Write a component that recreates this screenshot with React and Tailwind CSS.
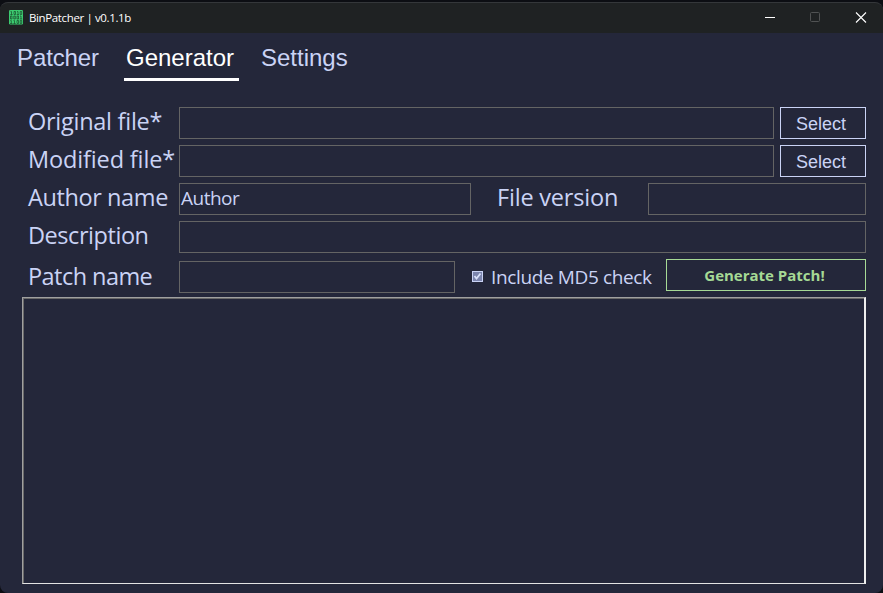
const segoe = "font-['Open_Sans','Noto_Sans',sans-serif]";
const arial = "font-['Liberation_Sans',Arial,sans-serif]";

function AppIcon() {
  return (
    <svg width="14" height="15" viewBox="0 0 14 15" className="block">
      <rect width="14" height="14.500" rx="1.200" fill="#3ccb70" />
      <g fill="none" stroke="#173d25" strokeWidth=".65">
        <path d="M1.500 1.600h1v3M1.300 4.600h2.400M5 1.500h1.500v3h-1.500zM8 1.600h1v3M7.700 4.600h2.300M11.200 1.500h1.500v3h-1.500z" />
        <path d="M1.500 6h1.500v3h-1.500zM4.800 6h1.500v3h-1.500zM8 6h1.500v3h-1.500zM11 6h1v3M10.800 9h2.400" />
        <path d="M1.300 10.600h1v3M1 13.500h2.500M4.500 10.600h1v3M4.300 13.500h2.400M8 10.500h1.500v3h-1.500zM11.200 10.500h1.500v3h-1.500z" />
      </g>
    </svg>
  );
}

function TitleBar() {
  return (
    <header className="flex h-[31px] shrink-0 items-start rounded-t-lg border-t border-[#34373a] bg-[#1f2223]">
      <div className="ml-[9px] mt-[7px]">
        <AppIcon />
      </div>
      <span className="ml-[6px] mt-[7px] whitespace-nowrap font-['Open_Sans','Noto_Sans',sans-serif] text-[11.5px] leading-4 tracking-[-0.37px] text-white">
        BinPatcher | v0.1.1b
      </span>
      <div className="ml-auto mr-[16px] mt-[9px] flex">
        <svg width="11" height="11" viewBox="0 0 11 11" className="mr-[34px]"><path d="M0 5.500h10" stroke="#fff" /></svg>
        <svg width="10" height="11" viewBox="0 0 10 11" className="mr-[35px]"><rect x=".5" y=".5" width="9" height="9" rx="1" fill="none" stroke="#505253" /></svg>
        <svg width="12" height="11" viewBox="0 0 12 11"><path d="M1 .5l10 10M11 .5l-10 10" stroke="#fff" strokeWidth="1.100" /></svg>
      </div>
    </header>
  );
}

function Label({ className = "", children }) {
  return (
    <span className={`${segoe} -mt-[2px] block shrink-0 whitespace-nowrap text-[23.5px] leading-8 ${className}`}>
      {children}
    </span>
  );
}

function Field({ className = "", value = "" }) {
  return (
    <div className={`${segoe} h-8 shrink-0 border border-[#646464] pl-[1px] text-[19px] leading-[29px] tracking-[-0.5px] ${className}`}>
      {value}
    </div>
  );
}

function SelectButton() {
  return (
    <button className={`${arial} ml-[6px] h-8 w-[86px] shrink-0 border border-[#cad3f5] pr-1 pt-[2px] text-[18px] leading-7`}>
      Select
    </button>
  );
}

export default function App() {
  return (
    <div className="flex h-[593px] w-[883px] flex-col overflow-hidden bg-[#0c0e13] pt-[2px] text-[#cad3f5]">
      <TitleBar />
      <main className="flex flex-1 flex-col rounded-b-lg bg-[#24273a]">
        <nav className={`${arial} flex h-12 shrink-0 pl-[15px] text-[24px] leading-[50px]`}>
          <span className="w-[84px] pl-[2px] tracking-[-0.1px]">Patcher</span>
          <span className="ml-[25px] w-[115px] border-b-[3px] border-white pl-[2px] text-white">Generator</span>
          <span className="ml-[20px] pl-[2px]">Settings</span>
        </nav>
        <section className="flex flex-col gap-[6px] pl-[28px] pr-[17px] pt-[26px]">
          <div className="flex">
            <Label className="w-[151px] tracking-[-0.27px]">Original file*</Label>
            <Field className="w-[595px]" />
            <SelectButton />
          </div>
          <div className="flex">
            <Label className="w-[151px] tracking-[-0.14px]">Modified file*</Label>
            <Field className="w-[595px]" />
            <SelectButton />
          </div>
          <div className="flex">
            <Label className="w-[151px] tracking-[-0.4px]">Author name</Label>
            <Field className="w-[292px]" value="Author" />
            <Label className="ml-[26px] w-[151px] tracking-[-0.2px]">File version</Label>
            <Field className="w-[218px]" />
          </div>
          <div className="flex">
            <Label className="w-[151px] tracking-[-0.45px]">Description</Label>
            <Field className="w-[687px]" />
          </div>
          <div className="flex h-[34px]">
            <Label className="w-[151px] pt-[3px] tracking-[-0.55px]">Patch name</Label>
            <Field className="mt-[2px] w-[276px]" />
            <div className="ml-[17px] mt-[12px] flex h-[11px] w-[11px] items-center justify-center border border-[#cad3f5] bg-[#7b84ad]">
              <svg width="9" height="9" viewBox="0 0 9 9"><path d="M1.500 4l2 2.500l4-5" fill="none" stroke="#d8e0fa" strokeWidth="1.800" /></svg>
            </div>
            <span className={`${segoe} ml-[8px] mt-[2px] w-[175px] whitespace-nowrap text-[19px] leading-8 tracking-[-0.37px]`}>
              Include MD5 check
            </span>
            <button className={`${segoe} h-8 w-[200px] shrink-0 border border-[#a6da95] pr-[3px] text-[15px] font-bold leading-7 text-[#a6da95]`}>
              Generate Patch!
            </button>
          </div>
        </section>
        <div className="ml-[22px] mr-[17px] mt-[4px] h-[287px] shrink-0 border-b border-l border-r-2 border-t border-b-[#e3e3e3] border-l-[#a0a0a0] border-r-[#eeeeee] border-t-[#a0a0a0]">
          <div className="h-full border-l border-t border-[#696969]" />
        </div>
      </main>
    </div>
  );
}
